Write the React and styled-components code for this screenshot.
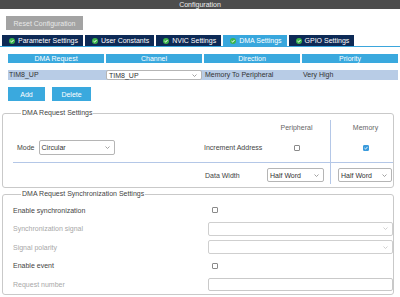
import React from "react";
import styled, { createGlobalStyle } from "styled-components";

const GlobalStyle = createGlobalStyle`
  html, body {
    margin: 0;
    padding: 0;
    background: #ffffff;
  }
  body {
    font-family: "Liberation Sans", Arial, sans-serif;
    font-size: 7px;
    color: #444444;
  }
`;

const Page = styled.div`
  width: 400px;
  height: 297px;
  overflow: hidden;
  display: flex;
  flex-direction: column;
`;

const TitleBar = styled.div`
  height: 9px;
  line-height: 10px;
  background: #4d4d4d;
  color: #f0f0f0;
  text-align: center;
`;

const Toolbar = styled.div`
  display: flex;
  padding: 7px 0 0 6px;
`;

const ResetButton = styled.button`
  width: 77px;
  height: 14px;
  border: none;
  padding: 0;
  background: #a3a3a3;
  color: #e8e8e8;
  font: inherit;
`;

const TabBar = styled.div`
  display: flex;
  gap: 2px;
  margin-top: 5px;
  padding-left: 2px;
  border-bottom: 1px solid #3ba6dc;
`;

const Tab = styled.div`
  display: flex;
  align-items: center;
  gap: 3px;
  height: 11px;
  padding: 0 5px 0 7px;
  background: ${(p) => (p.$active ? "#38a7dd" : "#0d2a56")};
  color: #ffffff;
  white-space: nowrap;
`;

const Table = styled.div`
  margin-top: 7px;
  padding: 0 2px 0 8px;
`;

const GridRow = styled.div`
  display: grid;
  grid-template-columns: repeat(4, 1fr);
  gap: 2px;
  height: ${(p) => (p.$head ? "9px" : "10px")};
  margin-top: ${(p) => (p.$head ? "0" : "7px")};
  background: ${(p) => (p.$head ? "transparent" : "#b8cce6")};
`;

const HeadCell = styled.div`
  background: #3aa9de;
  color: #ffffff;
  text-align: center;
  line-height: 9px;
`;

const Cell = styled.div`
  line-height: 10px;
  padding-left: 1px;
  color: #333;
`;

const Select = styled.div`
  display: flex;
  align-items: center;
  justify-content: space-between;
  box-sizing: border-box;
  height: ${(p) => p.$h || "14px"};
  width: ${(p) => p.$w || "auto"};
  padding: 0 4px 0 2px;
  background: #ffffff;
  border: 1px solid ${(p) => (p.$disabled ? "#cfcfcf" : "#b5b5b5")};
  border-radius: 2px;
  color: #333;
`;

const ButtonRow = styled.div`
  display: flex;
  gap: 7px;
  margin-top: 7px;
  padding-left: 8px;
`;

const BlueButton = styled.button`
  width: ${(p) => p.$w};
  height: 14px;
  border: none;
  padding: 0;
  background: #3aa9de;
  color: #ffffff;
  font: inherit;
`;

const Group = styled.fieldset`
  margin: ${(p) => p.$top} 6px 0 2px;
  padding: ${(p) => p.$pad};
  border: 1px solid #c9c9c9;
  border-radius: 3px;
  min-width: 0;
`;

const Legend = styled.legend`
  margin-left: 8px;
  padding: 0 1px;
  line-height: 8px;
  color: #444;
`;

const SettingsGrid = styled.div`
  display: grid;
  grid-template-columns: 188px 62px 67px 1fr;
  grid-template-rows: 16px 26px 1px 21px;
  align-items: center;
`;

const ColHead = styled.div`
  text-align: center;
  color: #666;
  align-self: stretch;
  line-height: 16px;
  border-left: ${(p) => (p.$divider ? "1px solid #b4c7e7" : "none")};
  padding-left: ${(p) => (p.$divider ? "7px" : "0")};
`;

const Slot = styled.div`
  display: flex;
  align-items: center;
  align-self: stretch;
  gap: ${(p) => p.$gap || "0"};
  justify-content: ${(p) => p.$justify || "flex-start"};
  padding: ${(p) => p.$pad || "0"};
  border-left: ${(p) => (p.$divider ? "1px solid #b4c7e7" : "none")};
  color: #444;
`;

const Separator = styled.div`
  grid-column: 1 / -1;
  height: 1px;
  background: #b4c7e7;
`;

const SyncGrid = styled.div`
  display: grid;
  grid-template-columns: 195px 1fr;
  grid-auto-rows: 18.5px;
  align-items: center;
`;

const SyncLabel = styled.div`
  color: ${(p) => (p.$disabled ? "#a8a8a8" : "#444")};
`;

const Box = styled.div`
  box-sizing: border-box;
  width: 6px;
  height: 6px;
  margin-left: ${(p) => p.$ml || "0"};
  border: 1px solid ${(p) => (p.$checked ? "#3a9bdc" : "#8a8a8a")};
  border-radius: 1px;
  background: ${(p) => (p.$checked ? "#3a9bdc" : "#ffffff")};
  display: flex;
  align-items: center;
  justify-content: center;
`;

const Input = styled.div`
  box-sizing: border-box;
  height: 13px;
  border: 1px solid #c9c9c9;
  border-radius: 2px;
  background: #fff;
`;

const TabIcon = () => (
  <svg width="6" height="6" viewBox="0 0 6 6">
    <circle cx="3" cy="3" r="3" fill="#3bb44a" />
    <path d="M1.5 3.1 L2.6 4.1 L4.5 2" fill="none" stroke="#fff" strokeWidth="1" />
  </svg>
);

const Chevron = ({ light }) => (
  <svg width="5" height="3" viewBox="0 0 5 3">
    <path d="M0.5 0.5 L2.5 2.5 L4.5 0.5" fill="none" stroke={light ? "#c4c4c4" : "#8a8a8a"} strokeWidth="0.8" />
  </svg>
);

const Check = ({ checked, ml }) => (
  <Box $checked={checked} $ml={ml}>
    {checked && (
      <svg width="4" height="4" viewBox="0 0 4 4">
        <path d="M0.4 2 L1.6 3.1 L3.6 0.8" fill="none" stroke="#fff" strokeWidth="0.9" />
      </svg>
    )}
  </Box>
);

const tabs = ["Parameter Settings", "User Constants", "NVIC Settings", "DMA Settings", "GPIO Settings"];

export default function App() {
  return (
    <Page>
      <GlobalStyle />
      <TitleBar>Configuration</TitleBar>
      <Toolbar>
        <ResetButton>Reset Configuration</ResetButton>
      </Toolbar>
      <TabBar>
        {tabs.map((t) => (
          <Tab key={t} $active={t === "DMA Settings"}>
            <TabIcon />
            {t}
          </Tab>
        ))}
      </TabBar>

      <Table>
        <GridRow $head>
          <HeadCell>DMA Request</HeadCell>
          <HeadCell>Channel</HeadCell>
          <HeadCell>Direction</HeadCell>
          <HeadCell>Priority</HeadCell>
        </GridRow>
        <GridRow>
          <Cell>TIM8_UP</Cell>
          <Select $h="10px">
            TIM8_UP
            <Chevron />
          </Select>
          <Cell>Memory To Peripheral</Cell>
          <Cell>Very High</Cell>
        </GridRow>
      </Table>

      <ButtonRow>
        <BlueButton $w="37px">Add</BlueButton>
        <BlueButton $w="39px">Delete</BlueButton>
      </ButtonRow>

      <Group $top="8px" $pad="3px 0 3px 10px">
        <Legend>DMA Request Settings</Legend>
        <SettingsGrid>
          <div />
          <div />
          <ColHead>Peripheral</ColHead>
          <ColHead $divider>Memory</ColHead>

          <Slot $pad="0 0 3px 4px" $gap="4px">
            Mode
            <Select $w="76px" $h="15px">
              Circular
              <Chevron />
            </Select>
          </Slot>
          <Slot $pad="0 0 3px 3px">Increment Address</Slot>
          <Slot $pad="0 0 3px 0" $justify="center">
            <Check />
          </Slot>
          <Slot $pad="0 0 3px 7px" $justify="center" $divider>
            <Check checked />
          </Slot>

          <Separator />

          <Slot />
          <Slot $pad="3px 0 0 4px">Data Width</Slot>
          <Slot $pad="3px 6px 0 4px">
            <Select $w="100%">
              Half Word
              <Chevron />
            </Select>
          </Slot>
          <Slot $pad="3px 1px 0 7px" $divider>
            <Select $w="100%">
              Half Word
              <Chevron />
            </Select>
          </Slot>
        </SettingsGrid>
      </Group>

      <Group $top="2px" $pad="3px 0 0 10px">
        <Legend>DMA Request Synchronization Settings</Legend>
        <SyncGrid>
          <SyncLabel>Enable synchronization</SyncLabel>
          <Check ml="4px" />
          <SyncLabel $disabled>Synchronization signal</SyncLabel>
          <Select $disabled>
            <span />
            <Chevron light />
          </Select>
          <SyncLabel $disabled>Signal polarity</SyncLabel>
          <Select $disabled>
            <span />
            <Chevron light />
          </Select>
          <SyncLabel>Enable event</SyncLabel>
          <Check ml="4px" />
          <SyncLabel $disabled>Request number</SyncLabel>
          <Input />
        </SyncGrid>
      </Group>
    </Page>
  );
}
